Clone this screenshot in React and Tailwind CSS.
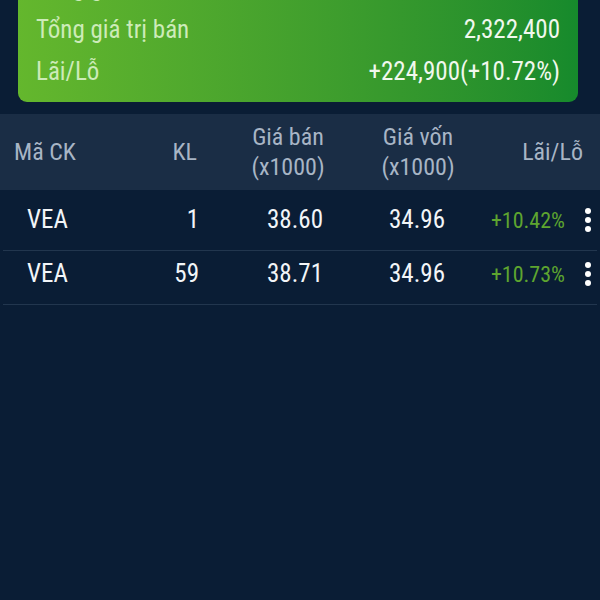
import React from "react";

const font = { fontFamily: '"Roboto Condensed", Roboto, "Liberation Sans", sans-serif' };

function Dots() {
  return (
    <div className="flex flex-col items-center gap-[3px]">
      <span className="block w-[6px] h-[6px] rounded-full bg-white" />
      <span className="block w-[6px] h-[6px] rounded-full bg-white" />
      <span className="block w-[6px] h-[6px] rounded-full bg-white" />
    </div>
  );
}

export default function App() {
  const rows = [
    { code: "VEA", kl: "1", ban: "38.60", von: "34.96", pct: "+10.42%" },
    { code: "VEA", kl: "59", ban: "38.71", von: "34.96", pct: "+10.73%" },
  ];
  return (
    <div className="w-[600px] h-[600px] bg-[#0a1d35] overflow-hidden" style={font}>
      <div className="pl-[18px] pr-[22px] mt-[-39px]">
        <div className="rounded-[9px] bg-gradient-to-r from-[#64b72d] to-[#168a2c] px-[18px] pt-[6px] pb-[9px] text-[25px]">
          <div className="flex justify-between items-center h-[42px]">
            <span className="text-[#cdebb9]">Tổng giá trị mua</span>
            <span className="text-[#f1f8ee]">2,097,500</span>
          </div>
          <div className="flex justify-between items-center h-[42px]">
            <span className="text-[#cdebb9]">Tổng giá trị bán</span>
            <span className="text-[#f1f8ee]">2,322,400</span>
          </div>
          <div className="flex justify-between items-center h-[42px]">
            <span className="text-[#cdebb9]">Lãi/Lỗ</span>
            <span className="text-[#f1f8ee]">+224,900(+10.72%)</span>
          </div>
        </div>
      </div>
      <div className="mt-[12px] bg-[#1a2d45] h-[76px] flex items-center text-[#a8b5c5] text-[24px] leading-[30px]">
        <div className="w-[130px] pl-[14px] shrink-0">Mã CK</div>
        <div className="w-[67px] text-right shrink-0">KL</div>
        <div className="w-[182px] flex flex-col items-center shrink-0">
          <div>Giá bán</div>
          <div>(x1000)</div>
        </div>
        <div className="w-[78px] flex flex-col items-center shrink-0">
          <div>Giá vốn</div>
          <div>(x1000)</div>
        </div>
        <div className="flex-1 text-right pr-[17px]">Lãi/Lỗ</div>
      </div>
      <div className="pt-[7px]">
        {rows.map((r, i) => (
          <div key={i} className="flex items-center h-[54px] pb-[7px] border-b border-[#22364e] mx-[3px] text-[#f2f5f8] text-[25px]">
            <div className="w-[124px] pl-[24px] shrink-0">{r.code}</div>
            <div className="w-[72px] text-right shrink-0">{r.kl}</div>
            <div className="w-[192px] flex justify-center shrink-0">{r.ban}</div>
            <div className="w-[52px] flex justify-center shrink-0">{r.von}</div>
            <div className="flex-1 text-right text-[22px] text-[#5ea52f]">{r.pct}</div>
            <div className="w-[32px] flex justify-end pr-[6px] shrink-0">
              <Dots />
            </div>
          </div>
        ))}
      </div>
    </div>
  );
}
